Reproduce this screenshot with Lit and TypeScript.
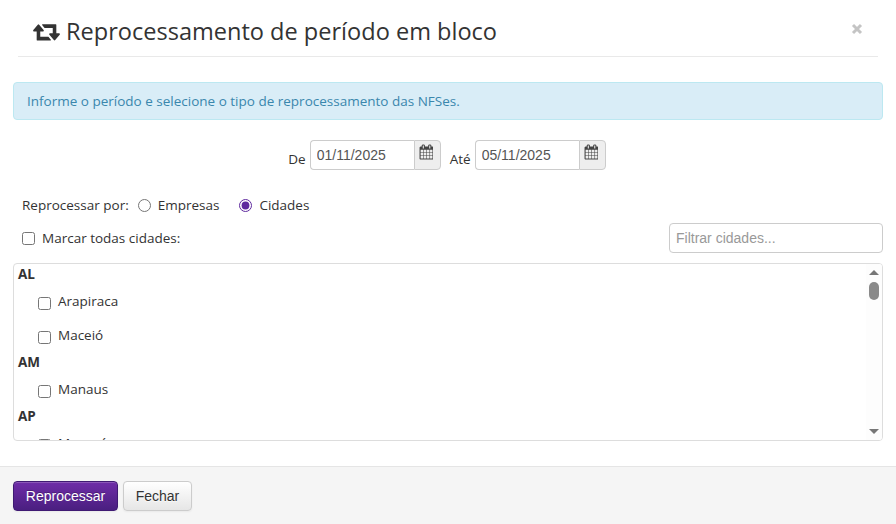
import { LitElement, html, css, svg } from "lit";
import { customElement } from "lit/decorators.js";

const retweet = svg`<path d="M1280 1504q0 13-9.5 22.5t-22.5 9.5h-960q-8 0-13.5-2t-9-7-5.5-8-3-11.5-1-11.5v-600h-192q-26 0-45-19t-19-45q0-24 15-41l320-384q19-22 49-22t49 22l320 384q15 17 15 41 0 26-19 45t-45 19h-192v384h576q16 0 25 11l160 192q7 11 7 21zm640-416q0 24-15 41l-320 384q-20 23-49 23t-49-23l-320-384q-15-17-15-41 0-26 19-45t45-19h192v-384h-576q-16 0-25-12l-160-192q-7-9-7-20 0-13 9.5-22.5t22.5-9.5h960q8 0 13.5 2t9 7 5.5 8.5 3 11.5 1 11.5v600h192q26 0 45 19t19 45z"/>`;
const calendar = svg`<path d="M192 1664h288v-288h-288v288zm352 0h320v-288h-320v288zm-352-352h288v-320h-288v320zm352 0h320v-320h-320v320zm-352-384h288v-288h-288v288zm736 736h320v-288h-320v288zm-384-736h320v-288h-320v288zm768 736h288v-288h-288v288zm-384-352h320v-320h-320v320zm-352-864v-288q0-13-9.5-22.5t-22.5-9.5h-64q-13 0-22.5 9.5t-9.5 22.5v288q0 13 9.5 22.5t22.5 9.5h64q13 0 22.5-9.5t9.5-22.5zm736 864h288v-320h-288v320zm-384-384h320v-288h-320v288zm384 0h288v-288h-288v288zm32-480v-288q0-13-9.5-22.5t-22.5-9.5h-64q-13 0-22.5 9.5t-9.5 22.5v288q0 13 9.5 22.5t22.5 9.5h64q13 0 22.5-9.5t9.5-22.5zm384-64v1280q0 52-38 90t-90 38h-1408q-52 0-90-38t-38-90v-1280q0-52 38-90t90-38h128v-96q0-66 47-113t113-47h64q66 0 113 47t47 113v96h384v-96q0-66 47-113t113-47h64q66 0 113 47t47 113v96h128q52 0 90 38t38 90z"/>`;

const groups: [string, string[]][] = [
  ["AL", ["Arapiraca", "Maceió"]],
  ["AM", ["Manaus"]],
  ["AP", ["Macapá"]],
];

@customElement("app-root")
export class AppRoot extends LitElement {
  static styles = css`
    :host {
      display: flex;
      flex-direction: column;
      width: 896px;
      height: 524px;
      overflow: hidden;
      background: #fff;
      font-family: "Open Sans", "Noto Sans", sans-serif;
      font-size: 13.5px;
      color: #333;
    }
    * { box-sizing: border-box; }
    .header {
      margin: 0 18px;
      height: 57px;
      border-bottom: 1px solid #e9e9e9;
      display: flex;
      align-items: center;
      gap: 6px;
      padding: 6px 15px 0;
    }
    .header svg.rt { width: 27px; height: 25px; fill: #333; flex: none; }
    .title { font-size: 23.55px; line-height: 30px; color: #333; flex: 1; white-space: nowrap; }
    .close { width: 12px; height: 12px; margin-top: -4px; }
    .close path { stroke: #c4c4c4; stroke-width: 3; fill: none; }
    .body { flex: 1; padding: 25px 13px 0; display: flex; flex-direction: column; }
    .alert {
      height: 38px;
      display: flex;
      align-items: center;
      padding: 0 13px;
      background: #d9edf7;
      border: 1px solid #bce8f1;
      border-radius: 4px;
      color: #3a87ad;
    }
    .dates {
      display: flex;
      justify-content: center;
      align-items: center;
      margin-top: 20px;
      height: 30px;
      padding-right: 2px;
    }
    .dates label { margin-right: 4px; padding-top: 7px; }
    .dates .group + label { margin-left: 9px; }
    .group { display: flex; height: 30px; }
    .group input {
      width: 104px;
      height: 30px;
      border: 1px solid #ccc;
      border-right: 0;
      border-radius: 4px 0 0 4px;
      padding: 0 6px 0;
      font-family: "Liberation Sans", Arial, sans-serif;
      font-size: 14px;
      color: #555;
      background: #fff;
      outline: none;
    }
    .addon {
      width: 27px;
      height: 30px;
      background: #eee;
      border: 1px solid #ccc;
      border-radius: 0 4px 4px 0;
      display: flex;
      justify-content: flex-start;
      padding: 3px 0 0 4px;
    }
    .addon svg { width: 14px; height: 16px; fill: #444; }
    .by {
      display: flex;
      align-items: center;
      margin-top: 25px;
      height: 20px;
      padding-left: 9px;
    }
    .by input { margin: 0 7px 0 9px; width: 13px; height: 13px; accent-color: #5f2a9e; flex: none; }
    .by .opt { margin-right: 11px; }
    .mark {
      display: flex;
      align-items: center;
      justify-content: space-between;
      margin-top: 8px;
      height: 30px;
      padding-left: 9px;
    }
    .mark .left { display: flex; align-items: center; gap: 7px; }
    .mark .left input { margin: 0; width: 13px; height: 13px; flex: none; }
    .filter {
      width: 214px;
      height: 30px;
      border: 1px solid #ccc;
      border-radius: 4px;
      padding: 0 6px 1px;
      font-family: "Liberation Sans", Arial, sans-serif;
      font-size: 14px;
      outline: none;
    }
    .filter::placeholder { color: #999; opacity: 1; }
    .list {
      position: relative;
      margin-top: 10px;
      height: 178px;
      border: 1px solid #ddd;
      border-radius: 4px;
      overflow: hidden;
      padding-left: 4px;
    }
    .uf { font-weight: 700; height: 20px; line-height: 20px; }
    .city { height: 34px; display: flex; align-items: flex-start; gap: 7px; padding-left: 20px; padding-top: 8px; line-height: 18px; }
    .city input { margin: 5px 0 0 0; width: 13px; height: 13px; flex: none; }
    .scroll {
      position: absolute;
      top: 0;
      right: 0;
      bottom: 0;
      width: 16px;
      background: #fdfdfd;
      display: flex;
      flex-direction: column;
      align-items: center;
      justify-content: space-between;
      padding: 6px 0 6px;
    }
    .arrow-up { width: 0; height: 0; border: 5px solid transparent; border-top: 0; border-bottom: 5px solid #777; }
    .arrow-down { width: 0; height: 0; border: 5px solid transparent; border-bottom: 0; border-top: 5px solid #777; }
    .thumb { position: absolute; top: 18px; left: 3px; width: 10px; height: 18px; border-radius: 5px; background: #8a8a8a; }
    .footer {
      height: 58px;
      background: #f5f5f5;
      border-top: 1px solid #e5e5e5;
      display: flex;
      align-items: center;
      gap: 5px;
      padding: 0 13px;
      flex: none;
    }
    button {
      height: 30px;
      border-radius: 4px;
      font-family: "Liberation Sans", Arial, sans-serif;
      font-size: 14px;
      padding: 0;
      box-shadow: inset 0 1px 0 rgba(255, 255, 255, 0.2), 0 1px 2px rgba(0, 0, 0, 0.05);
    }
    .primary {
      width: 105px;
      color: #fff;
      border: 1px solid #3f1a73;
      text-shadow: 0 -1px 0 rgba(0, 0, 0, 0.25);
      background: linear-gradient(#6f2da8, #4a1f80);
    }
    .default {
      width: 69px;
      color: #333;
      border: 1px solid #ccc;
      text-shadow: 0 1px 1px rgba(255, 255, 255, 0.75);
      background: linear-gradient(#fff, #e6e6e6);
    }
  `;

  render() {
    return html`
      <div class="header">
        <svg class="rt" viewBox="0 0 1920 1792">${retweet}</svg>
        <span class="title">Reprocessamento de período em bloco</span>
        <svg class="close" viewBox="0 0 12 12"><path d="M2 2L10 10M10 2L2 10"/></svg>
      </div>
      <div class="body">
        <div class="alert">Informe o período e selecione o tipo de reprocessamento das NFSes.</div>
        <div class="dates">
          <label>De</label>
          <div class="group">
            <input value="01/11/2025" />
            <span class="addon"><svg viewBox="0 0 1664 1792">${calendar}</svg></span>
          </div>
          <label>Até</label>
          <div class="group">
            <input value="05/11/2025" />
            <span class="addon"><svg viewBox="0 0 1664 1792">${calendar}</svg></span>
          </div>
        </div>
        <div class="by">
          <span>Reprocessar por:</span>
          <input type="radio" name="by" />
          <span class="opt">Empresas</span>
          <input type="radio" name="by" checked />
          <span>Cidades</span>
        </div>
        <div class="mark">
          <div class="left"><input type="checkbox" /><span>Marcar todas cidades:</span></div>
          <input class="filter" placeholder="Filtrar cidades..." />
        </div>
        <div class="list">
          ${groups.map(
            ([uf, cities]) => html`
              <div class="uf">${uf}</div>
              ${cities.map(
                (c) => html`<div class="city"><input type="checkbox" /><span>${c}</span></div>`
              )}
            `
          )}
          <div class="scroll">
            <span class="arrow-up"></span>
            <span class="thumb"></span>
            <span class="arrow-down"></span>
          </div>
        </div>
      </div>
      <div class="footer">
        <button class="primary">Reprocessar</button>
        <button class="default">Fechar</button>
      </div>
    `;
  }
}
